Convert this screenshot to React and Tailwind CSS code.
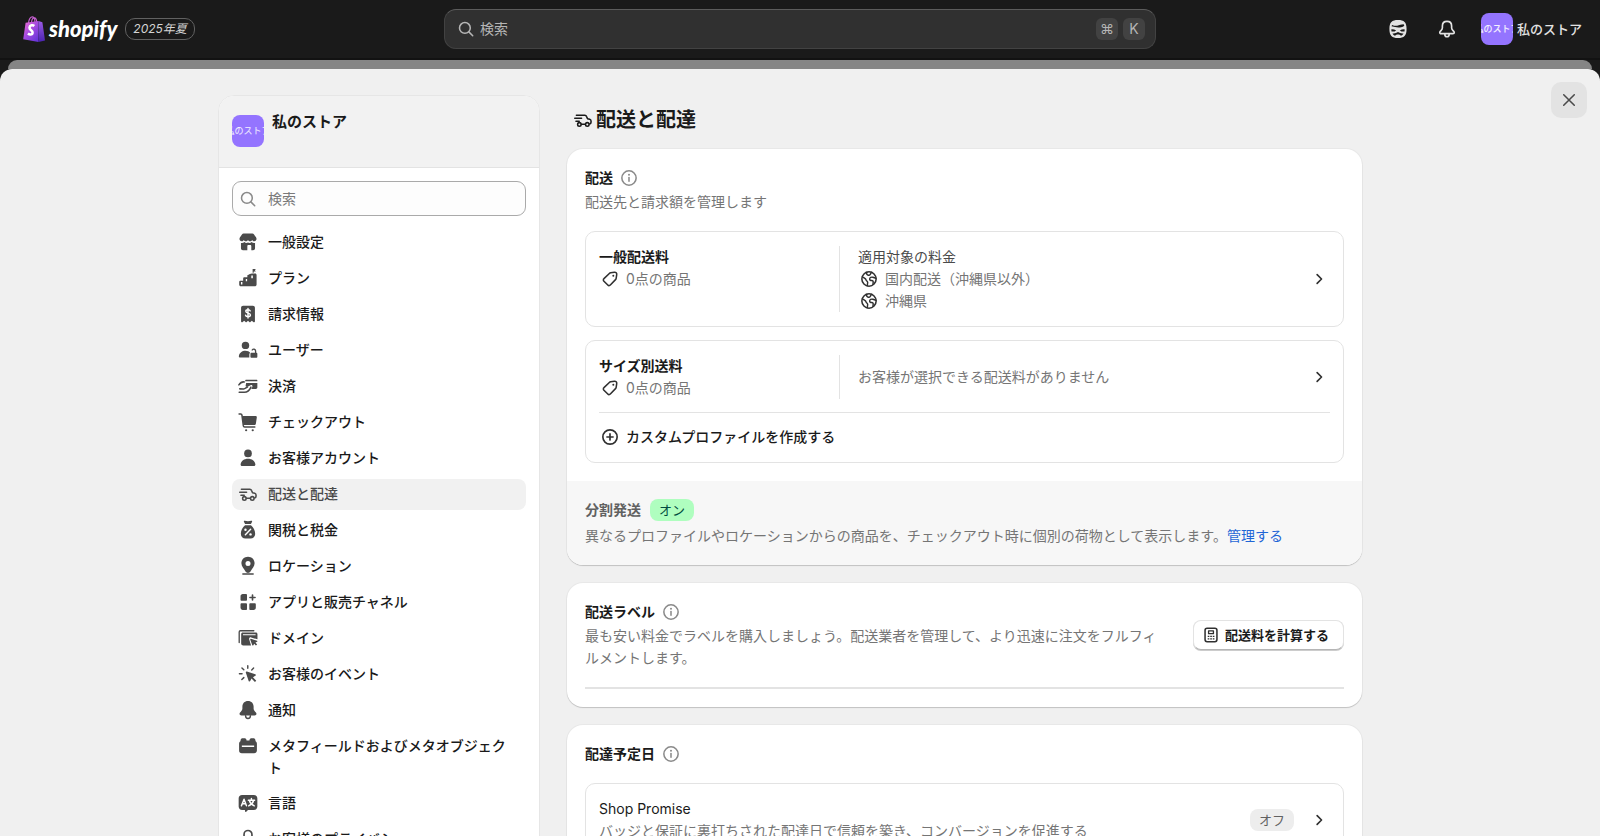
import React from 'react';

const fontStack = 'font-[Inter,"Noto_Sans_CJK_JP",sans-serif]';

// All icons are drawn on a 20x20 grid
const Icon = ({ children, className = 'size-[22px]' }) => (
  <svg viewBox="0 0 20 20" className={`shrink-0 ${className}`} fill="currentColor" aria-hidden="true">
    {children}
  </svg>
);

const Line = ({ d, width = 1.5 }) => (
  <path d={d} fill="none" stroke="currentColor" strokeWidth={width} strokeLinecap="round" strokeLinejoin="round" />
);

const StoreIcon = () => (
  <Icon>
    <path d="M6 2.300h8c.6 0 1.100.3 1.500.8l1.900 2.900c.9 1.600 0 3.300-1.700 3.300-.9 0-1.500-.5-1.900-1.200-.4.7-1 1.200-1.900 1.200-.8 0-1.500-.5-1.900-1.200-.4.7-1.100 1.200-1.900 1.200-.9 0-1.500-.5-1.900-1.200-.4.7-1 1.200-1.900 1.200-1.700 0-2.600-1.700-1.700-3.300l1.900-2.900c.4-.5.9-.8 1.500-.8Z" />
    <path d="M3.600 10.800c1.200.3 2.300 0 3.100-.7 1 .9 2.300 1 3.300.4 1 .6 2.300.5 3.300-.4.8.7 1.900 1 3.100.7v4.900c0 1-.8 1.800-1.800 1.800h-1.600v-3.700c0-.6-.4-1-1-1h-1.600c-.6 0-1 .4-1 1v3.700H5.400c-1 0-1.800-.8-1.800-1.800v-4.900Z" />
    <path d="M10.700 14h1v3.500h-1z" fill="#fff" />
  </Icon>
);

const PlanIcon = () => (
  <Icon>
    <path d="M14.200 1.800h2.900l-.8 1.200.8 1.100h-1.900v1.200h-1V1.800Z" />
    <path d="M13.500 6h3c.8 0 1.300.6 1.300 1.300v8.600c0 1-.7 1.700-1.700 1.700H3.600c-1 0-1.600-.6-1.600-1.600v-2.400c0-.7.5-1.200 1.200-1.200h2.400v-1.900c0-.7.5-1.200 1.200-1.200h2.600V7.500C10.800 7 12.700 6 13.500 6Z" />
    <path d="M3.600 13.700h1.300v2.300H3.600zM8 10.900h1.200v2H8zM13 7.800h1.400v2.500H13z" fill="#fff" />
  </Icon>
);

const BillingIcon = () => (
  <Icon>
    <path d="M5.500 2.500h9c1 0 1.800.8 1.800 1.800v12.300c0 .8-.9 1.200-1.500.7l-1.300-1.100-1.300 1.100c-.3.300-.7.300-1 0L10 16.200l-1.200 1.100c-.3.300-.7.300-1 0l-1.300-1.100-1.300 1.100c-.6.5-1.500.1-1.500-.7V4.300c0-1 .8-1.800 1.800-1.800Z" />
    <g className="text-white">
      <Line d="M12 7.200c-.2-.7-.9-1.100-2-1.100-1.200 0-2 .5-2 1.500 0 2.200 4.200 1 4.200 3.200 0 1-.9 1.600-2.200 1.600-1.200 0-2-.5-2.200-1.300M10 5v8.600" width={1.300} />
    </g>
  </Icon>
);

const UsersIcon = () => (
  <Icon>
    <circle cx="7.700" cy="5.800" r="3.400" />
    <path d="M7.700 10.600c2 0 3.500.7 4.300 1.800-.5.300-.8.900-.8 1.500v3H3c-.9 0-1.500-.7-1.300-1.500.5-3 2.900-4.800 6-4.800Z" />
    <path d="M13.200 12.500h4.300c.6 0 1 .4 1 1v2.600c0 .6-.4 1-1 1h-4.300c-.6 0-1-.4-1-1v-2.600c0-.6.4-1 1-1Z" />
    <Line d="M16.900 12.500v-1.700a1.700 1.700 0 0 0-3.100-.8" width={1.200} />
  </Icon>
);

const PaymentsIcon = () => (
  <Icon>
    <path d="M8.300 4.300h9.700c.3 0 .5.200.5.500v.8H7.300c.1-.7.400-1.300 1-1.300ZM8.300 7.200h10.200v4.200c0 .8-.6 1.300-1.400 1.300h-4.200l1-1.900c.5-1.100-.5-2-1.500-1.500l-3 1.300c-.8.300-1.500 0-1.600-.5Z" />
    <Line d="M1.700 9c1.300-2 3-3 4.900-2.700M2.500 12.600l3.500.1c1.600-.2 2.300-1.300 3.600-1.700M2 15.600l4.700.1c2.400 0 4.600-1.600 6-4.700" width={1.400} />
  </Icon>
);

const CartIcon = () => (
  <Icon>
    <path d="M4.800 4.500h12.100c.7 0 1.200.6 1.100 1.300l-.8 5.500c-.1.900-.8 1.500-1.700 1.500H5.800Z" />
    <Line d="M1.900 2.800h1.500c.6 0 1 .4 1.100 1l1.300 9.800c.1.600.5 1 1.100 1h9.300" width={1.400} />
    <circle cx="8.300" cy="17.500" r="1" />
    <circle cx="14.300" cy="17.500" r="1" />
  </Icon>
);

const PersonIcon = () => (
  <Icon>
    <circle cx="10" cy="5.800" r="3.500" />
    <path d="M10 10.700c3.600 0 6.200 1.900 6.700 4.900.2.900-.5 1.600-1.400 1.600H4.700c-.9 0-1.600-.7-1.400-1.600.5-3 3.100-4.900 6.700-4.900Z" />
  </Icon>
);

const TruckIcon = ({ className }) => (
  <Icon className={className}>
    <Line d="M4 5.700h7.700c.7 0 1.200.3 1.400.9l1 2.200 2 .6c.7.200 1.200.8 1.200 1.600v1.100c0 .8-.4 1.400-1.200 1.500M12.100 13.800H8.600M2.500 8.400h6.200M3.600 11.100h3" width={1.400} />
    <circle cx="6.700" cy="14" r="1.600" fill="none" stroke="currentColor" strokeWidth="1.400" />
    <circle cx="13.900" cy="14" r="1.600" fill="none" stroke="currentColor" strokeWidth="1.400" />
  </Icon>
);

const TaxIcon = () => (
  <Icon>
    <path d="M7.100 1.700c1.900.6 3.900.6 5.800 0 .6-.2 1.100.4.8.9l-1 1.900H7.300l-1-1.900c-.3-.5.2-1.100.8-.9Z" />
    <path d="M7.300 5.600h5.400c2.200 1.700 3.800 4.700 3.800 7.700 0 2.700-1.700 4.400-4.300 4.400H7.800c-2.600 0-4.300-1.700-4.300-4.400 0-3 1.600-6 3.800-7.700Z" />
    <g className="text-white">
      <Line d="M12.400 9.300l-4.800 5" width={1.300} />
      <circle cx="7.700" cy="9.700" r="1.100" />
      <circle cx="12.300" cy="14" r="1.100" />
    </g>
  </Icon>
);

const LocationIcon = () => (
  <Icon>
    <path fillRule="evenodd" d="M10 1.700c3.400 0 6 2.500 6 5.900 0 2.900-2.300 5-3.900 7.600-.9 1.400-3.300 1.400-4.200 0C6.300 12.600 4 10.500 4 7.600c0-3.400 2.600-5.900 6-5.900Zm0 3.800a2.300 2.300 0 1 0 0 4.600 2.300 2.300 0 0 0 0-4.600Z" />
    <Line d="M5.300 17.300h9.400" width={1.300} />
  </Icon>
);

const AppsIcon = () => (
  <Icon>
    <path d="M5.200 2.700h2.900c.6 0 1 .4 1 1v4.200c0 .6-.4 1-1 1H4.200c-.6 0-1-.4-1-1V4.700c0-1.100.9-2 2-2ZM4.200 11.100h3.900c.6 0 1 .4 1 1v4.200c0 .6-.4 1-1 1H5.200c-1.100 0-2-.9-2-2v-3.200c0-.6.4-1 1-1ZM12.200 11.100h3.900c.6 0 1 .4 1 1v3.200c0 1.100-.9 2-2 2h-2.900c-.6 0-1-.4-1-1v-4.200c0-.6.4-1 1-1Z" />
    <Line d="M14.100 3.600v4.600M11.800 5.900h4.600" />
  </Icon>
);

const DomainIcon = () => (
  <Icon>
    <Line d="M2 14.200V4.500c0-.7.400-1.100 1.100-1.100h12.200" width={1.200} />
    <path fillRule="evenodd" d="M5.300 5.100h11.800c.9 0 1.500.6 1.500 1.400v4.700l-5.700-1.700c-1.200-.4-2.200.6-1.800 1.800l1.700 5.500H5.700c-1.100 0-1.900-.7-1.900-1.800V6.500c0-.8.600-1.400 1.500-1.400Zm.1 1.500v1h11.500v-1H5.400Z" />
    <path d="M12.700 10.700l5.500 1.800c.5.200.5.800.1 1l-1.500.7 1.500 1.700-1.100 1-1.600-1.600-.7 1.300c-.2.500-.8.400-1-.1L12 11.400c-.1-.5.2-.8.700-.7Z" />
  </Icon>
);

const EventsIcon = () => (
  <Icon>
    <path d="M9 7.700l7.600 2.600c.7.200.7 1.100.1 1.400l-2.200 1.200 3 3.200-1.200 1.200-3.100-3.100-1.200 2.200c-.3.600-1.200.5-1.400-.1L8 8.700c-.2-.6.400-1.200 1-1Z" />
    <Line d="M9.800 2.500v2.300M4.500 4.500l1.700 1.700M2.200 9.700h2.400M4.400 15.100l1.800-1.800M15.100 4.600l-1.700 1.700" width={1.300} />
  </Icon>
);

const BellFillIcon = () => (
  <Icon>
    <path d="M10 1.800c3.100 0 5.100 2.200 5.100 5.100v1.800c0 1.100.4 1.800 1.400 2.800.7.700 1.200 1.200 1.200 2 0 .9-.7 1.500-1.700 1.500H4c-1 0-1.700-.6-1.700-1.500 0-.8.500-1.300 1.200-2 1-1 1.400-1.700 1.400-2.800V6.900c0-2.900 2-5.100 5.100-5.100Z" />
    <Line d="M7.800 15.300c0 3.200 4.400 3.200 4.400 0" width={1.300} />
  </Icon>
);

const MetafieldsIcon = () => (
  <Icon>
    <path fillRule="evenodd" d="M5 2.900h1.900c.8 0 1.400.5 1.600 1.300l.2.900h2.600l.2-.9c.2-.8.800-1.300 1.600-1.300H15c.8 0 1.400.5 1.600 1.300l.3 1.400c.8.500 1.200 1.400 1.200 2.300v6.200c0 1.400-1.100 2.500-2.500 2.500H4.400a2.500 2.500 0 0 1-2.500-2.500V7.900c0-.9.400-1.800 1.200-2.300l.3-1.400c.2-.8.800-1.300 1.600-1.300Zm-.6 6.700v1.300h11.200V9.600H4.400Z" />
  </Icon>
);

const LanguageIcon = () => (
  <Icon>
    <path d="M4.600 2.800h10.800c1.800 0 3.100 1.300 3.100 3.100v7.300c0 1.800-1.300 3.100-3.100 3.100H10l-1.600 1.700c-.4.400-1.100.1-1.100-.4l-.1-1.300H4.600c-1.800 0-3.100-1.300-3.100-3.100V5.900c0-1.800 1.300-3.100 3.100-3.100Z" />
    <g className="text-white">
      <Line d="M4 12.600l2.400-6 2.200 6M5 10.700h2.800M10.300 7.500h5.700M13.100 5.900v1.600M11.200 7.700c.7 2.400 2.400 4 4.500 4.900M15.100 7.700c-.7 2.400-2.400 4-4.500 4.900" width={1.300} />
    </g>
  </Icon>
);

const LockIcon = () => (
  <Icon>
    <path d="M5.500 8h9c1 0 1.800.8 1.800 1.800v5.400c0 1-.8 1.800-1.800 1.800h-9c-1 0-1.800-.8-1.800-1.800V9.800c0-1 .8-1.800 1.800-1.800Z" />
    <Line d="M6.400 8V5.900a3.600 3.600 0 0 1 7.200 0V8" />
  </Icon>
);

const SearchIcon = ({ className }) => (
  <Icon className={className}>
    <circle cx="9" cy="9" r="4.900" fill="none" stroke="currentColor" strokeWidth="1.400" />
    <Line d="M12.600 12.600l3.500 3.500" width={1.400} />
  </Icon>
);

const InfoIcon = () => (
  <Icon className="size-[22px] text-[#8a8a8a]">
    <circle cx="10" cy="10" r="6.500" fill="none" stroke="currentColor" strokeWidth="1.400" />
    <Line d="M10 9.500v3.500" width={1.400} />
    <circle cx="10" cy="7" r=".9" />
  </Icon>
);

const TagIcon = () => (
  <Icon className="size-[22px] text-[#303030]">
    <Line d="M10.600 4.400l3.400-.5c1.300-.2 2.300.8 2.100 2.100l-.5 3.400c-.1.500-.3.900-.6 1.200l-4.700 4.900c-.7.700-1.700.7-2.300 0l-3.500-3.500c-.7-.7-.7-1.700 0-2.300l4.900-4.700c.3-.3.700-.5 1.200-.6Z" width={1.400} />
    <circle cx="13" cy="7" r=".9" />
  </Icon>
);

const GlobeIcon = () => (
  <Icon className="size-[22px] text-[#303030]">
    <circle cx="10" cy="10" r="6.500" fill="none" stroke="currentColor" strokeWidth="1.400" />
    <Line d="M4 8l1.900 1.100c.9.500 1.300 1 1.500 1.900.2.800 1.400 1.100 1.400 2.100 0 .8-.3 1.200-.3 3.100M8 4c-.5 1.500.3 2.400 1.400 2.600.9.200 1.500-.4 1.900-1.100l.9-1.500M16.300 9.300l-2.800-.9c-1.400-.4-2.900.4-2.900 1.500 0 1 .9 1.500 1.900 1.500s1.400.6 1.300 1.500l-.2 2" width={1.300} />
  </Icon>
);

const PlusCircleIcon = () => (
  <Icon className="size-[22px] text-[#303030]">
    <circle cx="10" cy="10" r="6.500" fill="none" stroke="currentColor" strokeWidth="1.500" />
    <Line d="M10 7.200v5.600M7.200 10h5.600" />
  </Icon>
);

const ChevronIcon = () => (
  <Icon className="size-[22px] text-[#303030]">
    <Line d="M8.300 6l4 4-4 4" />
  </Icon>
);

const CalculatorIcon = () => (
  <Icon className="size-[22px] text-[#303030]">
    <Line d="M6.500 3.900h7c1.100 0 1.900.8 1.900 1.900v8.400c0 1.100-.8 1.900-1.900 1.900h-7c-1.100 0-1.900-.8-1.900-1.900V5.800c0-1.100.8-1.900 1.900-1.900Z" width={1.400} />
    <Line d="M7.800 6.300h4.400v2.500H7.800Z" width={1.200} />
    <path d="M7 10.700h1.500v1.200H7zM9.300 10.700h1.500v1.200H9.300zM11.600 10.700h1.500v1.200h-1.500zM7 13h1.500v1.200H7zM9.300 13h1.500v1.200H9.300zM11.600 13h1.500v1.200h-1.500z" />
  </Icon>
);

const SidekickIcon = () => (
  <Icon className="size-[22px]">
    <path d="M10 1.900c5.500 0 7.800 2 7.800 8s-2.300 8.200-7.800 8.200-7.800-2.200-7.800-8.200 2.300-8 7.800-8Z" />
    <g className="text-[#1a1a1a]">
      <path d="M4.100 7.600c.100-.5.300-.9.600-1.300 1.500.7 3 .9 4.500.7 2-.3 3.800-1.300 5.900-1.300.3.400.5.800.6 1.300-1.200.9-2.500 1.500-4 1.600-2.500.2-5-.2-7.600-1Z" />
      <path d="M4 10.300c1.600-.1 3.100.2 4.300 1-1.200 1-2.700 1.300-4.200.9-.1-.6-.2-1.200-.1-1.900ZM16 10.300c-1.600-.1-3.100.2-4.300 1 1.200 1 2.700 1.300 4.200.9.1-.6.200-1.200.1-1.900Z" />
      <path d="M5 14c1.900.2 3.600-.2 5-1.200 1.400 1 3.100 1.400 5 1.200-.5 1.100-1.300 1.800-2.500 2.100-.6-.7-1.400-1-2.500-1s-1.900.3-2.500 1C6.300 15.800 5.500 15.100 5 14Z" />
    </g>
  </Icon>
);

const BellIcon = () => (
  <Icon className="size-[22px]">
    <Line d="M10 3c2.600 0 4.200 1.800 4.200 4.200v1.600c0 1.200.5 1.900 1.300 2.700.7.700 1.100 1.100 1.100 1.600 0 .7-.5 1.100-1.200 1.100H4.600c-.7 0-1.200-.4-1.200-1.100 0-.5.400-.9 1.100-1.600.8-.8 1.300-1.500 1.300-2.700V7.200C5.800 4.800 7.400 3 10 3ZM8 14.700c0 3.100 4 3.100 4 0" />
  </Icon>
);

const ShopifyBag = () => (
  <svg viewBox="0 0 22 26" className="h-[26px] w-[22px] shrink-0" aria-hidden="true">
    <defs>
      <linearGradient id="bag" x1="0" y1="0" x2="0.8" y2="1">
        <stop offset="0" stopColor="#f36fd0" />
        <stop offset="0.5" stopColor="#a64be0" />
        <stop offset="1" stopColor="#6a35d9" />
      </linearGradient>
      <linearGradient id="bagSide" x1="0" y1="0" x2="0" y2="1">
        <stop offset="0" stopColor="#9b5be6" />
        <stop offset="1" stopColor="#4a23b0" />
      </linearGradient>
    </defs>
    <path d="M5.500 7C6 3 8 .8 9.600 .9c1.500.1 2.300 2.200 2.300 5M8.500 6.500c.3-3 1.800-4.700 3-4.600 1.400.1 2 1.700 2.200 4" fill="none" stroke="#c65fd0" strokeWidth="1.100" />
    <path d="M2.600 6.800 15.500 5v21L.2 23.300Z" fill="url(#bag)" />
    <path d="m15.500 5 3.900 1.200L22 24.500 15.500 26Z" fill="url(#bagSide)" />
    <path d="M11.300 9.900c-1.500-1.200-4.600-.8-4.800 1.700-.2 2.600 3.300 2.900 3.100 5.200-.2 2.100-2.900 2-4.700.7" fill="none" stroke="#fff" strokeWidth="2.600" />
  </svg>
);

const StoreAvatar = () => (
  <span className="flex size-8 shrink-0 items-center justify-center overflow-hidden rounded-lg bg-[#9474ff] text-[9px] whitespace-nowrap text-white/90">
    私のストア
  </span>
);

const navItems = [
  { label: '一般設定', icon: StoreIcon },
  { label: 'プラン', icon: PlanIcon },
  { label: '請求情報', icon: BillingIcon },
  { label: 'ユーザー', icon: UsersIcon },
  { label: '決済', icon: PaymentsIcon },
  { label: 'チェックアウト', icon: CartIcon },
  { label: 'お客様アカウント', icon: PersonIcon },
  { label: '配送と配達', icon: TruckIcon, active: true },
  { label: '関税と税金', icon: TaxIcon },
  { label: 'ロケーション', icon: LocationIcon },
  { label: 'アプリと販売チャネル', icon: AppsIcon },
  { label: 'ドメイン', icon: DomainIcon },
  { label: 'お客様のイベント', icon: EventsIcon },
  { label: '通知', icon: BellFillIcon },
  { label: 'メタフィールドおよびメタオブジェクト', icon: MetafieldsIcon },
  { label: '言語', icon: LanguageIcon },
  { label: 'お客様のプライバシー', icon: LockIcon },
];

const TopBar = () => (
  <header className="grid h-[60px] shrink-0 grid-cols-[1fr_minmax(0,712px)_1fr] items-center gap-4 border-b-2 border-[#121212] bg-[#1a1a1a] text-[#e3e3e3]">
    <div className="flex items-center gap-1 pl-[23px]">
      <ShopifyBag />
      <span className="font-[Lato,sans-serif] text-[22px] leading-6 font-black text-white italic">shopify</span>
      <span className="ml-1 rounded-[10px] border border-[#616161] px-[7px] text-xs leading-5 text-[#d4d4d4] italic">2025年夏</span>
    </div>
    <label className="flex h-10 items-center gap-[3px] rounded-xl border border-[#424242] border-t-[#5c5c5c] bg-[#303030] px-[10px] text-[#b5b5b5]">
      <SearchIcon className="size-[22px]" />
      <input type="search" placeholder="検索" aria-label="検索" className="min-w-0 flex-1 bg-transparent text-sm outline-none placeholder:text-[#b5b5b5]" />
      <kbd className={`flex size-[22px] items-center justify-center rounded-md bg-[#424242] text-sm ${fontStack}`}>⌘</kbd>
      <kbd className={`ml-[2px] flex size-[22px] items-center justify-center rounded-md bg-[#424242] text-sm ${fontStack}`}>K</kbd>
    </label>
    <div className="flex items-center justify-end gap-[27px] pr-[18px]">
      <button type="button" aria-label="Sidekick">
        <SidekickIcon />
      </button>
      <button type="button" aria-label="通知">
        <BellIcon />
      </button>
      <button type="button" className="-ml-1 flex items-center gap-1 text-[13px] font-medium whitespace-nowrap">
        <StoreAvatar />
        私のストア
      </button>
    </div>
  </header>
);

const Sidebar = () => (
  <aside className="flex w-[322px] shrink-0 flex-col overflow-hidden rounded-t-2xl border border-[#e6e6e6] bg-white">
    <div className="flex gap-2 border-b border-[#e3e3e3] bg-[#f2f2f2] px-[13px] pt-[15px] pb-5">
      <div className="pt-1">
        <StoreAvatar />
      </div>
      <span className="text-[15px] leading-[22px] font-semibold">私のストア</span>
    </div>
    <div className="px-[13px] pt-[13px]">
      <label className="flex h-[35px] items-center gap-[9px] rounded-[9px] border border-[#aaaaaa] bg-[#fdfdfd] px-[4px] text-[#8a8a8a]">
        <SearchIcon className="size-[22px]" />
        <input type="search" placeholder="検索" aria-label="設定を検索" className="min-w-0 flex-1 bg-transparent text-sm outline-none placeholder:text-[#7a7a7a]" />
      </label>
      <ul className="mt-[11px] flex flex-col gap-[5px]">
        {navItems.map(({ label, icon: NavIcon, active }) => (
          <li key={label}>
            <a
              href="#"
              aria-current={active ? 'page' : undefined}
              className={`flex min-h-[31px] items-start gap-[9px] rounded-lg py-1 pr-2 pl-[5px] text-sm leading-[22px] font-medium ${
                active ? 'bg-[#f1f1f1] text-[#4a4a4a]' : 'text-[#1a1a1a]'
              }`}
            >
              <span className="text-[#4a4a4a]">
                <NavIcon />
              </span>
              {label}
            </a>
          </li>
        ))}
      </ul>
    </div>
  </aside>
);

const Card = ({ children }) => (
  <section className="overflow-hidden rounded-2xl bg-white shadow-[0_0_0_1px_#00000008,0_1px_1px_#0000002b]">{children}</section>
);

const CardTitle = ({ children }) => (
  <h2 className="flex items-center gap-[5px] leading-[22px] font-semibold">
    {children}
    <InfoIcon />
  </h2>
);

const IconLine = ({ icon: LineIcon, children }) => (
  <span className="flex items-center gap-[5px] text-[#757575]">
    <LineIcon />
    {children}
  </span>
);

const RateRow = ({ title, children }) => (
  <a href="#" className="flex items-stretch leading-[22px]">
    <div className="w-[241px] shrink-0 border-r border-[#e3e3e3]">
      <h3 className="font-semibold">{title}</h3>
      <IconLine icon={TagIcon}>0点の商品</IconLine>
    </div>
    <div className="flex flex-1 flex-col justify-center pl-[18px]">{children}</div>
    <span className="self-center">
      <ChevronIcon />
    </span>
  </a>
);

const Box = ({ children }) => <div className="rounded-[10px] border border-[#e3e3e3] px-[13px] py-[14px]">{children}</div>;

const App = () => {
  return (
    <div className={`flex h-screen flex-col overflow-hidden bg-[#1a1a1a] text-sm text-[#1a1a1a] ${fontStack}`} lang="ja">
      <TopBar />
      <div className="mx-2 h-[9px] shrink-0 rounded-t-xl bg-[#858585]" />
      {/* the sheet's rounded corners sit over the dark frame */}
      <div className="relative min-h-0 flex-1 overflow-hidden rounded-t-xl bg-[#f0f0f0]">
        <div className="h-full overflow-y-auto pt-[26px] pr-5 [scrollbar-width:none]">
          <div className="mx-auto flex max-w-[1144px] gap-[27px]">
            <Sidebar />
            <main className="min-w-0 flex-1 pb-5">
              <h1 className="mt-[11px] mb-[15px] flex items-center gap-[2px] pl-[5px] text-[20px] leading-7 font-semibold">
                <TruckIcon className="size-[22px]" />
                配送と配達
              </h1>
              <div className="flex flex-col gap-[18px]">
                <Card>
                  <div className="p-[18px]">
                    <CardTitle>配送</CardTitle>
                    <p className="mt-[2px] mb-[18px] leading-[22px] text-[#757575]">配送先と請求額を管理します</p>
                    <div className="flex flex-col gap-[13px]">
                      <Box>
                        <RateRow title="一般配送料">
                          <span className="text-[#4a4a4a]">適用対象の料金</span>
                          <IconLine icon={GlobeIcon}>国内配送（沖縄県以外）</IconLine>
                          <IconLine icon={GlobeIcon}>沖縄県</IconLine>
                        </RateRow>
                      </Box>
                      <Box>
                        <RateRow title="サイズ別送料">
                          <p className="text-[#757575]">お客様が選択できる配送料がありません</p>
                        </RateRow>
                        <div className="mt-[13px] border-t border-[#e3e3e3] pt-[13px]">
                          <button type="button" className="flex items-center gap-[5px] leading-[22px] font-medium">
                            <PlusCircleIcon />
                            カスタムプロファイルを作成する
                          </button>
                        </div>
                      </Box>
                    </div>
                  </div>
                  <div className="bg-[#f7f7f7] p-[18px] leading-[22px]">
                    <div className="flex items-center gap-[9px]">
                      <h3 className="font-semibold text-[#616161]">分割発送</h3>
                      <span className="rounded-lg bg-[#affebf] px-[9px] text-[13px] text-[#014b40]">オン</span>
                    </div>
                    <p className="mt-1 text-[#757575]">
                      異なるプロファイルやロケーションからの商品を、チェックアウト時に個別の荷物として表示します。
                      <a href="#" className="text-[#1f66d6]">管理する</a>
                    </p>
                  </div>
                </Card>

                <Card>
                  <div className="p-[18px]">
                    <div className="flex items-center gap-6">
                      <div className="flex-1">
                        <CardTitle>配送ラベル</CardTitle>
                        <p className="mt-[2px] leading-[22px] text-[#757575]">
                          最も安い料金でラベルを購入しましょう。配送業者を管理して、より迅速に注文をフルフィルメントします。
                        </p>
                      </div>
                      <button
                        type="button"
                        className="flex h-[30px] shrink-0 items-center gap-[3px] rounded-lg border border-[#e3e3e3] border-b-[#b5b5b5] bg-white pr-[14px] pl-[6px] text-[13px] font-semibold shadow-[0_1px_0_#cccccc]"
                      >
                        <CalculatorIcon />
                        配送料を計算する
                      </button>
                    </div>
                    <hr className="mt-[18px] h-[2px] border-0 bg-[#e3e3e3]" />
                  </div>
                </Card>

                <Card>
                  <div className="p-[18px]">
                    <CardTitle>配達予定日</CardTitle>
                    <div className="mt-[18px]">
                      <Box>
                        <a href="#" className="flex items-center gap-[14px] leading-[22px]">
                          <div className="flex-1">
                            <h3>Shop Promise</h3>
                            <p className="text-[#757575]">バッジと保証に裏打ちされた配達日で信頼を築き、コンバージョンを促進する</p>
                          </div>
                          <span className="rounded-lg bg-[#ededed] px-[9px] text-[13px] text-[#616161]">オフ</span>
                          <ChevronIcon />
                        </a>
                      </Box>
                    </div>
                  </div>
                </Card>
              </div>
            </main>
          </div>
        </div>
        <button
          type="button"
          aria-label="閉じる"
          className="absolute top-[13px] right-[13px] flex size-9 items-center justify-center rounded-[10px] bg-[#e3e3e3] text-[#4a4a4a]"
        >
          <Icon className="size-[22px]">
            <Line d="M5.200 5.200l9.600 9.600M14.800 5.200l-9.600 9.600" width={1.400} />
          </Icon>
        </button>
      </div>
    </div>
  );
};

export default App;
